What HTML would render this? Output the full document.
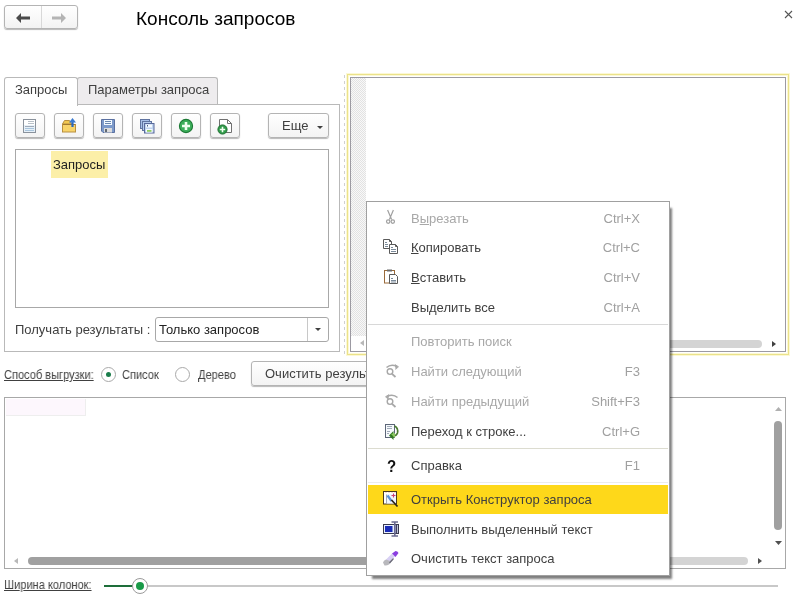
<!DOCTYPE html>
<html><head><meta charset="utf-8">
<style>
*{box-sizing:border-box;margin:0;padding:0}
html,body{width:802px;height:604px;overflow:hidden;background:#fff}
body{position:relative;font-family:"Liberation Sans",sans-serif;color:#4d4d4d}
.a{position:absolute}
.t{position:absolute;white-space:nowrap;font-size:13px;line-height:16px;will-change:transform}
.btn{position:absolute;border:1px solid #b4b4b4;border-radius:3px;background:linear-gradient(#fff,#f3f3f3);box-shadow:0 1px 1px #b8b8b8}
</style></head><body>

<!-- nav buttons -->
<div class="btn" style="left:4px;top:5px;width:74px;height:24px"></div>
<div class="a" style="left:41px;top:6px;width:1px;height:22px;background:#d8d8d8"></div>
<svg class="a" style="left:16px;top:12.5px" width="14" height="10" viewBox="0 0 14 10"><path d="M0 5 L5 0 L5 3.5 L14 3.5 L14 6.5 L5 6.5 L5 10 Z" fill="#4a4a4a"/></svg>
<svg class="a" style="left:52px;top:12.5px" width="14" height="10" viewBox="0 0 14 10"><path d="M14 5 L9 0 L9 3.5 L0 3.5 L0 6.5 L9 6.5 L9 10 Z" fill="#b4b4b4"/></svg>

<!-- title -->
<div class="t" style="left:136px;top:8px;font-size:19px;line-height:22px;color:#000">Консоль запросов</div>
<!-- close -->
<svg class="a" style="left:784px;top:10px" width="9" height="9" viewBox="0 0 9 9"><path d="M1 1 L8 8 M8 1 L1 8" stroke="#555" stroke-width="1.1"/></svg>

<!-- tabs -->
<div class="a" style="left:77px;top:77px;width:141px;height:28px;background:#eeecee;border:1px solid #b9b9b9;border-bottom:none;border-radius:3px 3px 0 0"></div>
<div class="t" style="left:88px;top:82px;color:#404040">Параметры запроса</div>
<div class="a" style="left:4px;top:104px;width:336px;height:248px;border:1px solid #b9b9b9"></div>
<div class="a" style="left:4px;top:77px;width:74px;height:29px;background:#fff;border:1px solid #b9b9b9;border-bottom:none;border-radius:3px 3px 0 0"></div>
<div class="t" style="left:15px;top:82px;color:#404040">Запросы</div>

<!-- toolbar buttons -->
<div class="btn" style="left:15px;top:113px;width:30px;height:25px"></div>
<div class="btn" style="left:54px;top:113px;width:30px;height:25px"></div>
<div class="btn" style="left:93px;top:113px;width:30px;height:25px"></div>
<div class="btn" style="left:132px;top:113px;width:30px;height:25px"></div>
<div class="btn" style="left:171px;top:113px;width:30px;height:25px"></div>
<div class="btn" style="left:210px;top:113px;width:30px;height:25px"></div>
<div class="btn" style="left:268px;top:113px;width:61px;height:25px"></div>
<div class="t" style="left:282px;top:118px;color:#404040">Еще</div>
<svg class="a" style="left:317px;top:126px" width="6" height="3" viewBox="0 0 6 3"><path d="M0 0 H6 L3 3 Z" fill="#404040"/></svg>


<!-- toolbar icons -->
<svg class="a" style="left:0;top:0" width="802" height="604" viewBox="0 0 802 604">
 <g>
  <rect x="23.5" y="119.5" width="12" height="13" fill="#fff" stroke="#8a929c"/>
  <rect x="24" y="125" width="11" height="7" fill="#e6f0f8"/>
  <path d="M28 121.5H34M28 123.5H34" stroke="#b8c0c8"/>
  <path d="M25 126.5H34" stroke="#a0aab8"/>
  <path d="M25 128.5H34M25 130.5H34" stroke="#a8c4dc"/>
 </g>
 <g>
  <path d="M62.5 124 L64.5 120.5 H69.5 L71.5 124 Z" fill="#f2c850" stroke="#b89040"/>
  <rect x="62.5" y="124.5" width="13" height="7.5" fill="#f8d46a" stroke="#b89040"/>
  <path d="M63 124.5H75" stroke="#a07830"/>
  <path d="M72.5 127V121.5" stroke="#2a68c0" stroke-width="2.2"/>
  <path d="M69 122.5 L72.5 118 L76 122.5 Z" fill="#3a7ad0"/>
 </g>
 <g>
  <path d="M101.5 119.5H114.5V132.5H103L101.5 131Z" fill="#7c9aca" stroke="#5a70a0"/>
  <rect x="104" y="120" width="8" height="5" fill="#f4faff"/>
  <path d="M105 121.5H111M105 123.5H111" stroke="#6a88b0"/>
  <rect x="104" y="128" width="8" height="4.5" fill="#dcdcdc"/>
  <rect x="105" y="129" width="2" height="3" fill="#606870"/>
 </g>
 <g>
  <rect x="140.5" y="119.5" width="9" height="9" fill="#a8c0e8" stroke="#6074a0"/>
  <rect x="142.5" y="121.5" width="9" height="9" fill="#b4cbee" stroke="#6074a0"/>
  <rect x="144.5" y="123.5" width="9.5" height="9.5" fill="#c0d4f0" stroke="#58699a"/>
  <rect x="146" y="124.5" width="6" height="3" fill="#f4faff"/>
  <rect x="147" y="125" width="1" height="1.5" fill="#4a5c84"/>
  <rect x="146" y="129" width="6.5" height="3.5" fill="#f4faff"/>
  <rect x="147" y="130" width="4.5" height="1.8" fill="#90cc60"/>
 </g>
 <g>
  <circle cx="186" cy="126" r="6.6" fill="#3cae5a" stroke="#1d7a36" stroke-width="1.1"/>
  <path d="M182 126H190M186 122V130" stroke="#f0fff0" stroke-width="2.6"/>
 </g>
 <g>
  <path d="M219.5 119.5H227.5L231.5 123.5V132.5H219.5Z" fill="#fff" stroke="#707070"/>
  <path d="M227.5 119.5V123.5H231.5" fill="none" stroke="#707070"/>
  <circle cx="222.5" cy="129.5" r="4.6" fill="#2e9a48" stroke="#1d7030"/>
  <path d="M219.8 129.5H225.2M222.5 126.8V132.2" stroke="#f0fff0" stroke-width="1.6"/>
 </g>
</svg>

<!-- list -->
<div class="a" style="left:15px;top:149px;width:314px;height:159px;border:1px solid #a8a8a8"></div>
<div class="a" style="left:51px;top:151px;width:57px;height:27px;background:#fcefa8"></div>
<div class="t" style="left:53px;top:157px;color:#222">Запросы</div>

<!-- dropdown -->
<div class="t" style="left:15px;top:322px;color:#404040">Получать результаты :</div>
<div class="a" style="left:155px;top:317px;width:174px;height:25px;border:1px solid #a8a8a8;border-radius:3px"></div>
<div class="a" style="left:307px;top:318px;width:1px;height:23px;background:#c8c8c8"></div>
<div class="t" style="left:159px;top:322px;color:#222">Только запросов</div>
<svg class="a" style="left:315px;top:328px" width="6" height="3" viewBox="0 0 6 3"><path d="M0 0 H6 L3 3 Z" fill="#404040"/></svg>

<!-- radio row -->
<div class="t" style="left:4px;top:368px;font-size:12px;line-height:14px;transform:scaleX(0.92);transform-origin:0 0;color:#404040;text-decoration:underline">Способ выгрузки:</div>
<div class="a" style="left:101px;top:367px;width:15px;height:15px;border:1px solid #a8a8a8;border-radius:50%"></div>
<div class="a" style="left:106px;top:372px;width:5px;height:5px;border-radius:50%;background:#1b7d4b"></div>
<div class="t" style="left:122px;top:368px;font-size:12px;line-height:14px;transform:scaleX(0.92);transform-origin:0 0;color:#404040">Список</div>
<div class="a" style="left:175px;top:367px;width:15px;height:15px;border:1px solid #a8a8a8;border-radius:50%"></div>
<div class="t" style="left:198px;top:368px;font-size:12px;line-height:14px;transform:scaleX(0.92);transform-origin:0 0;color:#404040">Дерево</div>
<div class="btn" style="left:251px;top:361px;width:140px;height:25px"></div>
<div class="t" style="left:265px;top:366px;color:#404040">Очистить результаты</div>

<!-- results area -->
<div class="a" style="left:4px;top:397px;width:782px;height:172px;border:1px solid #a8a8a8"></div>
<div class="a" style="left:6px;top:399px;width:80px;height:17px;background:#fdf7fd;border-right:1px solid #eeeeee;border-bottom:1px solid #eeeeee"></div>
<svg class="a" style="left:775px;top:407px" width="7" height="4" viewBox="0 0 7 4"><path d="M0 4 H7 L3.5 0 Z" fill="#b0b0b0"/></svg>
<div class="a" style="left:774px;top:421px;width:8px;height:109px;border-radius:4px;background:#a0a0a0"></div>
<svg class="a" style="left:775px;top:541px" width="7" height="4" viewBox="0 0 7 4"><path d="M0 0 H7 L3.5 4 Z" fill="#505050"/></svg>
<svg class="a" style="left:14px;top:558px" width="4" height="6" viewBox="0 0 4 6"><path d="M4 0 V6 L0 3 Z" fill="#b8b8b8"/></svg>
<div class="a" style="left:28px;top:557px;width:720px;height:8px;border-radius:4px;background:linear-gradient(90deg,#a0a0a0 0,#a0a0a0 500px,#d4d4d4 500px)"></div>
<svg class="a" style="left:758px;top:558px" width="4" height="6" viewBox="0 0 4 6"><path d="M0 0 V6 L4 3 Z" fill="#505050"/></svg>

<!-- slider -->
<div class="t" style="left:4px;top:578px;font-size:12px;line-height:14px;transform:scaleX(0.92);transform-origin:0 0;color:#404040;text-decoration:underline">Ширина колонок:</div>
<div class="a" style="left:104px;top:585px;width:30px;height:2px;background:#1e6e3a"></div>
<div class="a" style="left:146px;top:585px;width:632px;height:2px;background:#c8c8c8"></div>
<div class="a" style="left:132px;top:578px;width:16px;height:16px;border:1px solid #9a9a9a;border-radius:50%;background:#fff"></div>
<div class="a" style="left:136px;top:582px;width:8px;height:8px;border-radius:50%;background:#1a9a48"></div>

<!-- editor -->
<div class="a" style="left:344px;top:75px;width:1px;height:280px;background:repeating-linear-gradient(#d0d0d0 0 3px,transparent 3px 6px)"></div>
<div class="a" style="left:347px;top:74px;width:442px;height:281px;border:1px solid #ebe28a;box-shadow:0 0 0 1px #fcf8d4,inset 0 0 0 1px #fcf8d4"></div>
<div class="a" style="left:350px;top:77px;width:436px;height:275px;border:1px solid #9c9aa2;background:#fff"></div>
<div class="a" style="left:351px;top:78px;width:15px;height:258px;background-color:#f8f8f8;background-image:linear-gradient(45deg,#e2e2e2 25%,transparent 25%,transparent 75%,#e2e2e2 75%),linear-gradient(45deg,#e2e2e2 25%,transparent 25%,transparent 75%,#e2e2e2 75%);background-size:2px 2px;background-position:0 0,1px 1px"></div>
<svg class="a" style="left:360px;top:340px" width="4" height="6" viewBox="0 0 4 6"><path d="M4 0 V6 L0 3 Z" fill="#b8b8b8"/></svg>
<div class="a" style="left:600px;top:340px;width:162px;height:8px;border-radius:4px;background:#d4d4d4"></div>
<svg class="a" style="left:772px;top:341px" width="4" height="6" viewBox="0 0 4 6"><path d="M0 0 V6 L4 3 Z" fill="#404040"/></svg>

<!-- context menu -->
<div id="menu" class="a" style="left:366px;top:201px;width:304px;height:375px;background:#fff;border:1px solid #a0a0a0;box-shadow:4px 5px 2px -2px rgba(0,0,0,0.5)">
</div>
<div class="a" style="left:368px;top:324px;width:300px;height:1px;background:#d8d8d8"></div>
<div class="a" style="left:368px;top:448px;width:300px;height:1px;background:#dcdcd0"></div>
<div class="a" style="left:368px;top:482px;width:300px;height:1px;background:#ececec"></div>
<div class="a" style="left:368px;top:485px;width:300px;height:29px;background:#fed81a"></div>

<div class="t" style="left:411px;top:211px;color:#a8a8a8">В<u>ы</u>резать</div>
<div class="t" style="left:540px;width:100px;text-align:right;top:211px;color:#a0a0a0">Ctrl+X</div>
<div class="t" style="left:411px;top:240px;color:#404040"><u>К</u>опировать</div>
<div class="t" style="left:540px;width:100px;text-align:right;top:240px;color:#a0a0a0">Ctrl+C</div>
<div class="t" style="left:411px;top:270px;color:#404040"><u>В</u>ставить</div>
<div class="t" style="left:540px;width:100px;text-align:right;top:270px;color:#a0a0a0">Ctrl+V</div>
<div class="t" style="left:411px;top:300px;color:#404040">Выделить все</div>
<div class="t" style="left:540px;width:100px;text-align:right;top:300px;color:#a0a0a0">Ctrl+A</div>
<div class="t" style="left:411px;top:334px;color:#a8a8a8">Повторить поиск</div>
<div class="t" style="left:411px;top:364px;color:#a8a8a8">Найти следующий</div>
<div class="t" style="left:540px;width:100px;text-align:right;top:364px;color:#a0a0a0">F3</div>
<div class="t" style="left:411px;top:394px;color:#a8a8a8">Найти предыдущий</div>
<div class="t" style="left:540px;width:100px;text-align:right;top:394px;color:#a0a0a0">Shift+F3</div>
<div class="t" style="left:411px;top:424px;color:#404040">Переход к строке...</div>
<div class="t" style="left:540px;width:100px;text-align:right;top:424px;color:#a0a0a0">Ctrl+G</div>
<div class="t" style="left:411px;top:458px;color:#404040">Справка</div>
<div class="t" style="left:540px;width:100px;text-align:right;top:458px;color:#a0a0a0">F1</div>
<div class="t" style="left:411px;top:492px;color:#404040">Открыть Конструктор запроса</div>
<div class="t" style="left:411px;top:522px;color:#404040">Выполнить выделенный текст</div>
<div class="t" style="left:411px;top:551px;color:#404040">Очистить текст запроса</div>

<!-- menu icons -->
<svg class="a" style="left:0;top:0" width="802" height="604" viewBox="0 0 802 604">
 <!-- scissors -->
 <g stroke="#a0a0a0" fill="none" stroke-width="1.2">
  <path d="M387.6 210 L391.6 219.5 M393.4 210 L389.4 219.5"/>
  <circle cx="388.2" cy="221.6" r="1.7"/>
  <circle cx="392.8" cy="221.6" r="1.7"/>
 </g>
 <!-- copy -->
 <g stroke="#5a5a5a" fill="#fff">
  <path d="M383.5 239.5H389.5L391.5 241.5V248.5H383.5Z"/>
  <path d="M389.5 244.5H395.5L397.5 246.5V253.5H389.5Z"/>
  <path d="M389.5 239.5V241.5H391.5M395.5 244.5V246.5H397.5" fill="none"/>
  <path d="M385 242.5H387M385 244.5H388M385 246.5H388M391 247.5H393M391 249.5H396M391 251.5H396" stroke="#7a8a9a"/>
 </g>
 <!-- paste -->
 <g>
  <rect x="384.5" y="270.5" width="10" height="12.5" fill="#fff" stroke="#9a6a3a"/>
  <path d="M387 270.5H392" stroke="#6a6a6a" stroke-width="2"/>
  <path d="M389.5 274.5H395.5L397.5 276.5V283.5H389.5Z" fill="#fff" stroke="#5a5a5a"/>
  <path d="M391 278.5H393M391 280.5H396M391 282H396" stroke="#7a8a9a"/>
 </g>
 <!-- find next -->
 <g stroke="#a8a8a8" fill="none">
  <path d="M386.5 367.5 Q391 363.5 397 366.5" stroke-width="1.6"/>
  <path d="M395 364.5 L398.5 366.8 L395.5 369.5" fill="#a8a8a8" stroke-width="0.8"/>
  <circle cx="390" cy="371.6" r="2.8" stroke-width="1.4"/>
  <path d="M392 373.8 L395.5 377" stroke-width="1.8"/>
 </g>
 <!-- find prev -->
 <g stroke="#a8a8a8" fill="none">
  <path d="M397.5 397.5 Q393 393.5 387 396.5" stroke-width="1.6"/>
  <path d="M389 394.5 L385.5 396.8 L388.5 399.5" fill="#a8a8a8" stroke-width="0.8"/>
  <circle cx="390" cy="401.6" r="2.8" stroke-width="1.4"/>
  <path d="M392 403.8 L395.5 407" stroke-width="1.8"/>
 </g>
 <!-- goto line -->
 <g>
  <rect x="385.5" y="424.5" width="9" height="13" fill="#f6f9fc" stroke="#5c6678"/>
  <path d="M387 426.5H392M387 428.5H392M387 431.5H390M387 433.5H389" stroke="#a0aab8"/>
  <path d="M394.5 426 Q398.5 428 397.5 433 Q396.5 436 393 436" fill="none" stroke="#4a7a30" stroke-width="1.6"/>
  <path d="M389 435.5 L393.5 431 V440 Z" fill="#2f7a1e"/>
  <path d="M391 434 L395 433 V438 Z" fill="#8cc860"/>
 </g>
 <!-- constructor -->
 <g>
  <rect x="383.5" y="491.5" width="13" height="12.5" fill="#fff" stroke="#4a3a20"/>
  <path d="M385 492.5H387M388 492.5H390M391 492.5H393M394 492.5H396" stroke="#f4e0d0"/>
  <path d="M386.5 494.5V503.5" stroke="#a0a8b8"/>
  <rect x="387" y="494" width="9" height="9.5" fill="#f0f6fc"/>
  <path d="M387.5 495.5 L391.5 501" stroke="#5a90d8" stroke-width="2.2"/>
  <path d="M393.5 493.5 V497.5 M391.5 495.5 H395.5" stroke="#d04070" stroke-width="1.1"/>
  <path d="M391.5 500 L397.5 506.5" stroke="#2a2418" stroke-width="1.7"/>
 </g>
 <!-- execute -->
 <g>
  <rect x="383.5" y="524.5" width="15" height="9" fill="#e8f0ff" stroke="#3a3a50"/>
  <rect x="385" y="526" width="7.5" height="6" fill="#1a2cb8"/>
  <path d="M396.5 525 V533" stroke="#404060" stroke-width="1.5"/>
  <path d="M391.5 522 H398 M394.8 522 V536 M391.5 536 H398" stroke="#6a6a90" stroke-width="1.6"/>
 </g>
 <!-- eraser -->
 <g>
  <path d="M383 562.5 Q383.5 560.5 386 559.5 L390 558 L392.5 560.5 L389 564.5 Q387 565.8 384.5 565.5 Z" fill="#b8b8bc"/>
  <path d="M386 559.5 L392 553.5 L395 556.5 L390 561 Z" fill="#d8d0f4"/>
  <path d="M392 553.5 L395.5 551 Q397.5 551 398.5 553 L395.5 557 Z" fill="#8a3ee0"/>
  <path d="M389.5 563 L393.5 558.5" stroke="#6a6a78" stroke-width="1.2"/>
 </g>
</svg>

<div class="t" style="left:387px;top:457px;font-weight:bold;font-size:15px;color:#111;transform:scaleY(1.12);transform-origin:0 0">?</div>

</body></html>
